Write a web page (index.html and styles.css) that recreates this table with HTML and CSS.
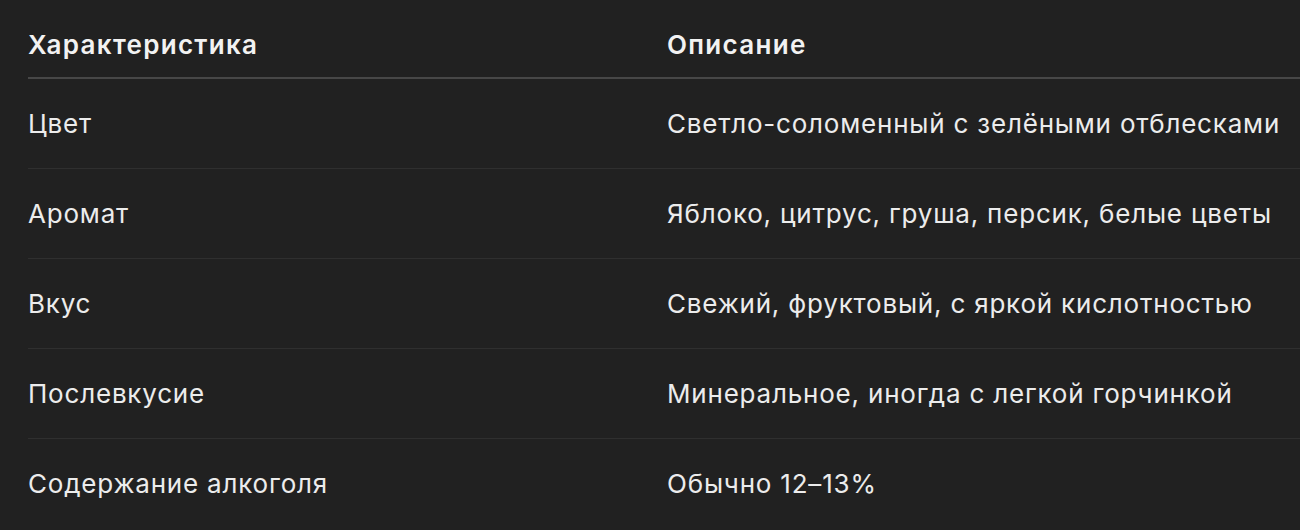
FILE: index.html
```html
<!DOCTYPE html>
<html lang="ru">
<head>
<meta charset="utf-8">
<link rel="stylesheet" href="styles.css">
</head>
<body>
<div class="wrap">
<table class="spec">
  <thead>
    <tr><th class="c1">Характеристика</th><th class="c2">Описание</th></tr>
  </thead>
  <tbody>
    <tr><td class="c1">Цвет</td><td class="c2">Светло-соломенный с зелёными отблесками</td></tr>
    <tr><td class="c1">Аромат</td><td class="c2">Яблоко, цитрус, груша, персик, белые цветы</td></tr>
    <tr><td class="c1">Вкус</td><td class="c2">Свежий, фруктовый, с яркой кислотностью</td></tr>
    <tr><td class="c1">Послевкусие</td><td class="c2">Минеральное, иногда с легкой горчинкой</td></tr>
    <tr><td class="c1">Содержание алкоголя</td><td class="c2">Обычно 12–13%</td></tr>
  </tbody>
</table>
</div>
</body>
</html>
```

FILE: styles.css
```css
html, body {
  margin: 0;
  padding: 0;
  background: #212121;
  overflow: hidden;
}
.wrap {
  padding: 11px 0 0 28px;
}
.spec {
  border-collapse: collapse;
  width: 1300px;
  font-family: Inter, "Noto Sans", sans-serif;
  font-size: 26px;
  letter-spacing: 0.8px;
  color: #ececec;
  text-align: left;
}
.spec th, .spec td {
  padding: 0;
  vertical-align: middle;
  white-space: nowrap;
}
.spec .c1 { width: 639px; }
.spec th {
  font-weight: 600;
  letter-spacing: 1.3px;
  height: 66px;
  border-bottom: 2px solid #474747;
  color: #f2f2f2;
}
.spec td {
  height: 89px;
  border-bottom: 1px solid #2f2f2f;
}
.spec tbody tr:last-child td { border-bottom: none; }
```
